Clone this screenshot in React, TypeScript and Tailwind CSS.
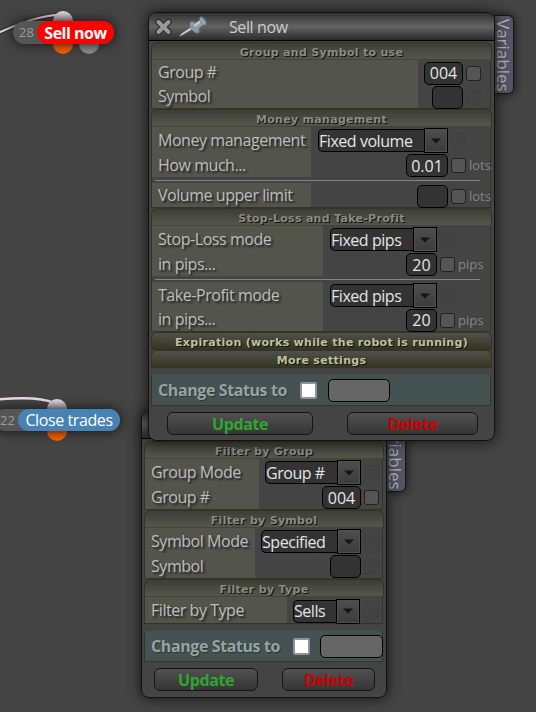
import type { ReactNode } from "react"
import clsx from "clsx"

const SectionTitle = ({ children, closed = false }: { children: ReactNode, closed?: boolean }) => {
    return (
        <div className={clsx(
            "-mr-px flex h-[18px] items-center justify-center rounded-t-[6px] border border-[#343522] bg-linear-to-b pt-[2px] font-['DejaVu_Sans'] text-[11px] leading-none font-bold tracking-[0.3px] whitespace-pre [text-shadow:1px_1px_0_#111]",
            closed ? "border-b-0 from-[#50514a] to-[#33341f] text-[#c0c09c]" : "border-b-[#454634] from-[#3d3e37] to-[#55564b] text-[#8a8b83]"
        )}>
            {children}
        </div>
    )
}

const Section = ({ children }: { children: ReactNode }) => {
    return <div className="border border-t-0 border-[#343522] bg-[#444]">{children}</div>
}

type RowProps = {
    label: string
    labelClass: string
    className?: string
    children: ReactNode
}

const Row = ({ label, labelClass, className = "h-[25px] pr-[24px]", children }: RowProps) => {
    return (
        <div className={clsx("flex items-center", className)}>
            <div className={clsx("flex h-full shrink-0 items-center bg-[#53544c] pl-[6px] tracking-[-0.45px] text-[#bdbdbd] [text-shadow:2px_2px_2px_#222]", labelClass)}>
                <span className="whitespace-nowrap">{label}</span>
            </div>
            <div className="ml-auto flex items-center pt-[2px]">{children}</div>
        </div>
    )
}

const Field = ({ value = "", className }: { value?: string, className: string }) => {
    return (
        <div className={clsx("relative flex h-[23px] items-center justify-center rounded-[5px] border border-black bg-[#333] text-[#e4e4e4]", className)}>
            {value}
        </div>
    )
}

const Select = ({ value, className }: { value: string, className: string }) => {
    return (
        <div className={clsx("relative flex h-[25px] items-center", className)}>
            <div className="flex h-[23px] min-w-0 grow items-center rounded-l-[5px] border border-r-0 border-black bg-[#333] tracking-[-0.45px] whitespace-nowrap text-[#e4e4e4]">{value}</div>
            <div className="flex h-[25px] w-6 shrink-0 items-center justify-center border border-black bg-linear-to-b from-[#4e4e4e] to-[#3c3c3c] shadow-[inset_0_0_0_1px_#505050]">
                <svg width="10" height="6" viewBox="0 0 10 6"><path d="M0 0.5H10L5 5.5Z" fill="#151515" /></svg>
            </div>
        </div>
    )
}

const Check = ({ off = false }: { off?: boolean }) => {
    return (
        <div className={clsx("ml-[3px] size-[15px] rounded-[3px] border", off ? "border-[#404040] bg-[#434343]" : "border-[#222] bg-[#555]")} />
    )
}

const Unit = ({ children }: { children: ReactNode }) => {
    return <span className="ml-[3px] w-[25px] text-[13px] text-[#858585]">{children}</span>
}

const Divider = () => {
    return (
        <div className="flex h-[6px] items-center pr-[10px] pl-[3px]">
            <div className="h-px w-full bg-[#858585]" />
        </div>
    )
}

const Status = ({ gap, field }: { gap: string, field: string }) => {
    return (
        <div className="mt-[7px] flex h-[31px] items-center border border-t-0 border-[#343522] bg-[#445352] pl-[6px]">
            <span className="w-[136px] shrink-0 font-bold tracking-[-0.4px] whitespace-nowrap text-[#93a5a3] [text-shadow:1px_1px_1px_#333]">Change Status to</span>
            <div className={clsx("size-[17px] shrink-0 rounded-[2px] border-2 border-[#9090a0] bg-white", gap)} />
            <div className={clsx("h-[23px] shrink-0 rounded-[5px] border border-black bg-[#666]", field)} />
        </div>
    )
}

const Button = ({ children, className }: { children: ReactNode, className: string }) => {
    return (
        <button className={clsx("flex h-[23px] items-center justify-center rounded-[6px] border border-[#151515] bg-linear-to-b from-[#515151] to-[#363636] font-bold tracking-[-0.4px]", className)}>
            {children}
        </button>
    )
}

const Tab = ({ className }: { className: string }) => {
    return (
        <div className={clsx("absolute flex h-[79px] w-[20px] items-center justify-center rounded-r-[6px] border border-[#151515] bg-[#555566] pt-[2px] pr-[2px] text-[17px] text-[#bbb] shadow-[0_0_10px_#111]", className)}>
            <span className="[writing-mode:vertical-rl]">Variables</span>
        </div>
    )
}

const TitleBar = ({ children }: { children?: ReactNode }) => {
    return (
        <div className="flex h-[28px] items-center rounded-t-[7px] border-b border-black bg-[linear-gradient(to_bottom,#303030,#636363_50%,#2b2b2b)]">
            {children}
        </div>
    )
}

const CloseIcon = () => (
    <svg className="ml-[5px]" width="20" height="20" viewBox="0 0 20 20" strokeLinecap="round">
        <path d="M4.5 5L14.5 15M14.5 5L4.5 15" stroke="#2b2b2b" strokeWidth="6.5" />
        <path d="M4.5 5L14.5 15M14.5 5L4.5 15" stroke="#999" strokeWidth="4" />
    </svg>
)

const PinIcon = () => (
    <svg className="ml-[4px]" width="31" height="24" viewBox="0 0 31 24">
        <path d="M1 21.5L4 18.3L14 11.5L15.5 13.5L4.5 20Z" fill="#c6cacd" />
        <ellipse cx="17" cy="12.2" rx="4.2" ry="7.2" transform="rotate(-35 17 12.2)" fill="#65727c" />
        <ellipse cx="16.3" cy="12.5" rx="3" ry="6.2" transform="rotate(-35 16.3 12.5)" fill="#8d99a2" />
        <path d="M15.5 9.5L22.5 4.5L26.5 9L19.5 14Z" fill="#95a0a8" />
        <path d="M15.5 10L23 5L24 6.5L17 11.8Z" fill="#c3cbd0" />
        <ellipse cx="25.3" cy="6" rx="3" ry="5.4" transform="rotate(-35 25.3 6)" fill="#5f6b74" />
        <ellipse cx="24.7" cy="6.2" rx="1.9" ry="4.2" transform="rotate(-35 24.7 6.2)" fill="#9aa6af" />
    </svg>
)

const TradesWindow = () => {
    return (
        <div className="absolute top-[410px] left-[141px] h-[288px] w-[246px]">
            <Tab className="top-[3px] right-[-19px]" />
            <div className="relative h-full rounded-[8px] border border-[#111] bg-[#444] shadow-[0_0_14px_#111]">
                <TitleBar />
                <div className="mr-[3px] ml-[2px] pt-[2px]">
                    <SectionTitle>Filter by Group</SectionTitle>
                    <Section>
                        <Row label="Group Mode" labelClass="w-[114px]" className="h-[25px] pr-[3px]">
                            <Select value="Group #" className="w-[96px]" /><Check off />
                        </Row>
                        <Row label="Group #" labelClass="w-[114px]" className="h-[25px] pr-[3px]">
                            <Field value="004" className="w-[39px]" /><Check />
                        </Row>
                    </Section>
                    <SectionTitle>Filter by Symbol</SectionTitle>
                    <Section>
                        <Row label="Symbol Mode" labelClass="w-[110px]" className="h-[25px] pr-[3px]">
                            <Select value="Specified" className="w-[100px]" /><Check off />
                        </Row>
                        <Row label="Symbol" labelClass="w-[110px]" className="h-[25px] pr-[3px]">
                            <Field className="w-[31px]" /><Check off />
                        </Row>
                    </Section>
                    <SectionTitle>Filter by Type</SectionTitle>
                    <Section>
                        <Row label="Filter by Type" labelClass="w-[142px]" className="h-[26px] pr-[4px]">
                            <Select value="Sells" className="w-[67px]" /><Check off />
                        </Row>
                    </Section>
                    <Status gap="ml-[6px]" field="ml-[10px] w-[63px]" />
                    <div className="mt-[6px] flex justify-between pr-[8px] pl-[10px]">
                        <Button className="w-[104px] text-[#2fa62f]">Update</Button>
                        <Button className="w-[93px] text-[#cc0000]">Delete</Button>
                    </div>
                </div>
            </div>
        </div>
    )
}

const SellWindow = () => {
    return (
        <div className="absolute top-[12px] left-[148px] h-[429px] w-[347px]">
            <Tab className="top-[3px] right-[-19px]" />
            <div className="relative h-full rounded-[8px] border border-[#111] bg-[#444] shadow-[0_0_14px_#111]">
                <TitleBar>
                    <CloseIcon />
                    <PinIcon />
                    <span className="ml-[20px] tracking-[-0.4px] text-[#ccc]">Sell now</span>
                </TitleBar>
                <div className="mr-[3px] ml-[2px] pt-px">
                    <SectionTitle>Group and Symbol to use</SectionTitle>
                    <Section>
                        <Row label="Group #" labelClass="w-[266px]" className="h-[24px] pr-[9px]">
                            <Field value="004" className="w-[39px]" /><Check />
                        </Row>
                        <Row label="Symbol" labelClass="w-[266px]" className="h-[24px] pr-[9px]">
                            <Field className="w-[31px]" /><Check off />
                        </Row>
                    </Section>
                    <SectionTitle>Money management</SectionTitle>
                    <Section>
                        <Row label="Money management" labelClass="w-[159px]">
                            <Select value="Fixed volume" className="w-[130px]" /><Check off />
                        </Row>
                        <Row label="How much..." labelClass="w-[159px]" className="-mr-[4px] h-[25px]">
                            <Field value="0.01" className="w-[42px]" /><Check /><Unit>lots</Unit>
                        </Row>
                        <Divider />
                        <Row label="Volume upper limit" labelClass="w-[159px]" className="-mr-[4px] h-[24px]">
                            <Field className="w-[31px]" /><Check /><Unit>lots</Unit>
                        </Row>
                    </Section>
                    <SectionTitle>Stop-Loss and Take-Profit</SectionTitle>
                    <Section>
                        <Row label="Stop-Loss mode" labelClass="w-[171px]" className="h-[25px] pr-[35px]">
                            <Select value="Fixed pips" className="w-[107px]" /><Check off />
                        </Row>
                        <Row label="in pips..." labelClass="w-[171px]" className="h-[25px] pr-[7px]">
                            <Field value="20" className="w-[31px]" /><Check /><Unit>pips</Unit>
                        </Row>
                        <Divider />
                        <Row label="Take-Profit mode" labelClass="w-[171px]" className="h-[25px] pr-[35px]">
                            <Select value="Fixed pips" className="w-[107px]" /><Check off />
                        </Row>
                        <Row label="in pips..." labelClass="w-[171px]" className="h-[24px] pr-[7px]">
                            <Field value="20" className="w-[31px]" /><Check /><Unit>pips</Unit>
                        </Row>
                    </Section>
                    <SectionTitle closed>Expiration (works while the robot is running)</SectionTitle>
                    <SectionTitle closed>More settings</SectionTitle>
                    <Status gap="ml-[6px]" field="ml-[11px] w-[62px]" />
                    <div className="mt-[6px] flex justify-between pr-[13px] pl-[16px]">
                        <Button className="w-[146px] text-[#2fa62f]">Update</Button>
                        <Button className="w-[131px] text-[#cc0000]">Delete</Button>
                    </div>
                </div>
            </div>
        </div>
    )
}

export default function App() {
    return (
        <div className="relative h-[712px] w-[536px] overflow-hidden bg-[#444] font-['Open_Sans',sans-serif] text-[16px] leading-none">
            {/* wires between the blocks */}
            <svg className="absolute inset-0" width="536" height="712" fill="none">
                <path d="M-2 33C18 24 40 15 60 15" stroke="#222" strokeOpacity="0.4" strokeWidth="5" />
                <path d="M-2 33C18 24 40 15 60 15" stroke="#e6d2df" strokeWidth="2" />
                <path d="M-2 399.5C20 397.5 42 397.5 54 403" stroke="#ecdbe8" strokeWidth="2.5" />
            </svg>

            {/* Sell now */}
            <div className="absolute top-[11px] left-[53px] size-[20px] rounded-full bg-linear-to-b from-[#eadcea] to-[#888088]" />
            <div className="absolute top-[34px] left-[53px] size-[20px] rounded-full bg-[#f96000]" />
            <div className="absolute top-[34px] left-[79px] size-[20px] rounded-full bg-[#8c8c8c]" />
            <div className="absolute top-[21px] left-[13px] flex h-[23px] w-[101px] items-center rounded-full bg-[#555] pl-[6px] text-[13px] text-[#999] shadow-[0_0_12px_#111]">
                28
                <div className="ml-auto flex h-full w-[77px] items-center justify-center rounded-full bg-[#f00] text-[16px] font-bold tracking-[-0.5px] text-white">Sell now</div>
            </div>

            {/* Close trades */}
            <div className="absolute top-[399px] left-[47px] size-[20px] rounded-full bg-linear-to-b from-[#eadcea] to-[#888088]" />
            <div className="absolute top-[421px] left-[47px] size-[20px] rounded-full bg-[#f96000]" />
            <div className="absolute top-[409px] left-[-6px] flex h-[22px] w-[126px] items-center rounded-full bg-[#555] pl-[6px] text-[13px] text-[#999] shadow-[0_0_12px_#111]">
                22
                <div className="ml-auto flex h-full w-[102px] items-center justify-center rounded-full bg-[#4682b4] text-[16px] tracking-[-0.4px] text-white">Close trades</div>
            </div>

            <TradesWindow />
            <SellWindow />
        </div>
    )
}
